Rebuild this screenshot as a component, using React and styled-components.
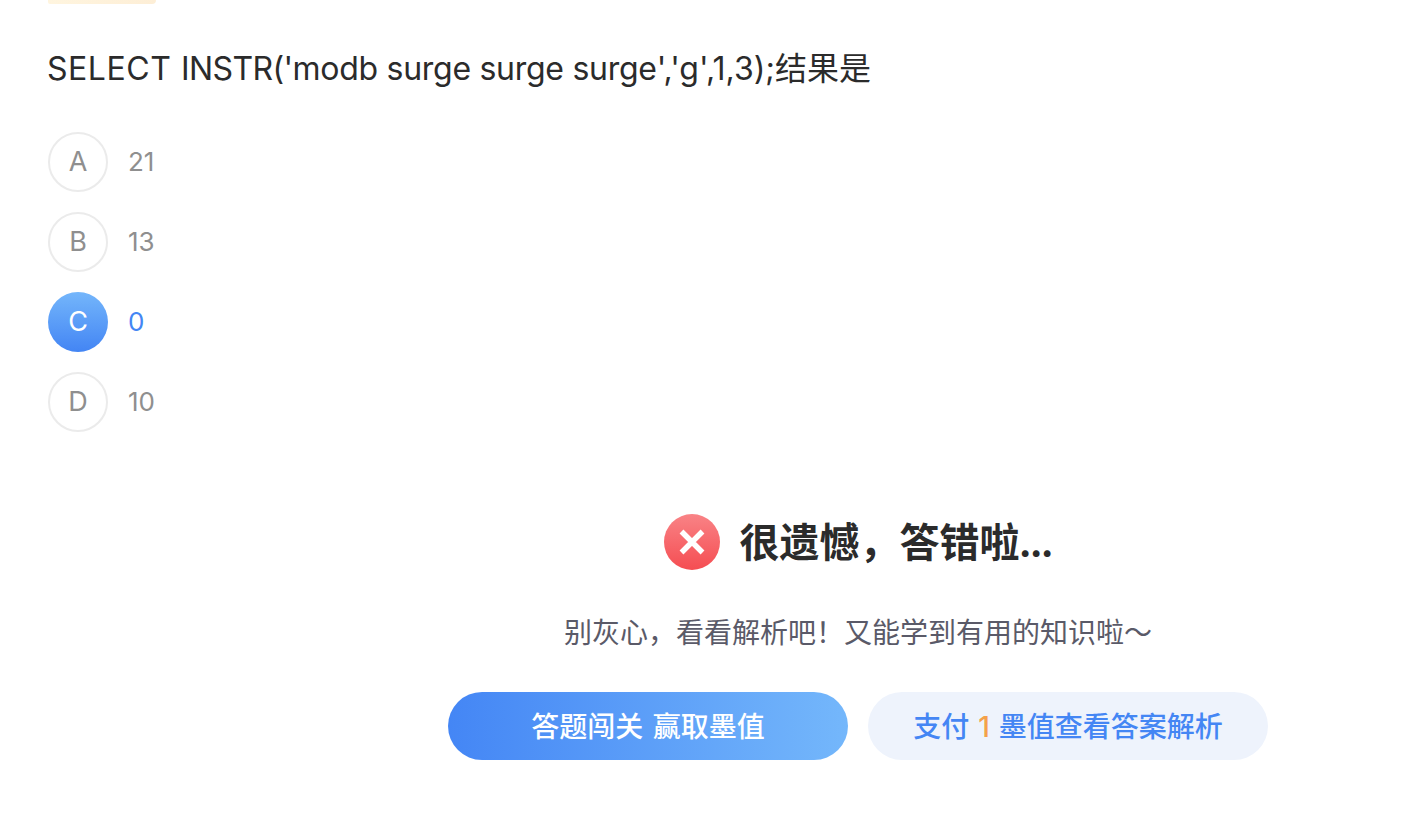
import styled, { createGlobalStyle } from 'styled-components';

const options = [
  { letter: 'A', text: '21' },
  { letter: 'B', text: '13' },
  { letter: 'C', text: '0' },
  { letter: 'D', text: '10' },
];

export default function App() {
  const selected = 'C';

  return (
    <StyledPage>
      <GlobalStyle />
      <StyledTag />
      <StyledQuestion>
        <StyledCode $spacing="0.55px">SELECT </StyledCode>
        <StyledCode $spacing="-0.6px">INSTR('</StyledCode>
        <StyledCode $spacing="-0.28px">modb surge surge surge</StyledCode>
        <StyledCode $spacing="0.02px">','g',1,3);</StyledCode>
        结果是
      </StyledQuestion>
      <StyledOptionList>
        {options.map(({ letter, text }) => (
          <StyledOption key={letter} $active={letter === selected}>
            <StyledLetter $active={letter === selected}>{letter}</StyledLetter>
            <StyledOptionText>{text}</StyledOptionText>
          </StyledOption>
        ))}
      </StyledOptionList>
      <StyledResult>
        <StyledResultTitle>
          <WrongIcon />
          <h2>很遗憾，答错啦<StyledDots>...</StyledDots></h2>
        </StyledResultTitle>
        <StyledHint>别灰心，看看解析吧！又能学到有用的知识啦～</StyledHint>
        <StyledButtons>
          <StyledButton $primary>答题闯关 赢取墨值</StyledButton>
          <StyledButton>支付 <em>1</em> 墨值查看答案解析</StyledButton>
        </StyledButtons>
      </StyledResult>
    </StyledPage>
  );
}

function WrongIcon() {
  return (
    <svg width="56" height="56" viewBox="0 0 56 56">
      <defs>
        <linearGradient id="wrong" x1="0" y1="0" x2="0" y2="1">
          <stop offset="0" stopColor="#f98386" />
          <stop offset="1" stopColor="#f54d52" />
        </linearGradient>
      </defs>
      <circle cx="28" cy="28" r="28" fill="url(#wrong)" />
      <path d="M17.5 17.5L38.5 38.5M38.5 17.5L17.5 38.5" stroke="#fff" strokeWidth="5.4" />
    </svg>
  );
}

const GlobalStyle = createGlobalStyle`
  * {
    box-sizing: border-box;
  }
  body {
    margin: 0;
    background: #ffffff;
    font-family: Inter, "Noto Sans CJK SC", sans-serif;
  }
`;
const StyledPage = styled.div`
  width: 1410px;
  height: 816px;
  padding: 0 48px;
  overflow: hidden;
`;
const StyledTag = styled.div`
  width: 108px;
  height: 4px;
  border-radius: 0 0 8px 4px;
  background: linear-gradient(90deg, #fff5df, #fdeed6);
`;
const StyledQuestion = styled.div`
  display: flex;
  height: 48px;
  margin: 40px 0 0 -1px;
  padding-top: 1px;
  line-height: 48px;
  font-size: 32px;
  color: #2b2b2b;
  white-space: pre;
`;
const StyledCode = styled.span`
  letter-spacing: ${({ $spacing }) => $spacing};
`;
const StyledOptionList = styled.div`
  display: flex;
  flex-direction: column;
  gap: 20px;
  margin-top: 40px;
`;
const StyledOption = styled.div`
  display: flex;
  align-items: center;
  gap: 20px;
  color: ${({ $active }) => ($active ? '#4486f4' : '#8f8f8f')};
`;
const StyledLetter = styled.div`
  display: flex;
  justify-content: center;
  align-items: center;
  width: 60px;
  height: 60px;
  padding-bottom: 1px;
  border-radius: 50%;
  border: ${({ $active }) => ($active ? 'none' : '2px solid #ebebeb')};
  background: ${({ $active }) => ($active ? 'linear-gradient(180deg, #74b6fb, #4385f4)' : '#ffffff')};
  color: ${({ $active }) => ($active ? '#ffffff' : '#8f8f8f')};
  font-size: 27px;
`;
const StyledOptionText = styled.span`
  padding-bottom: 2px;
  font-size: 26px;
`;
const StyledResult = styled.div`
  display: flex;
  flex-direction: column;
  align-items: center;
  width: 820px;
  margin: 82px 0 0 400px;
`;
const StyledResultTitle = styled.div`
  display: flex;
  align-items: center;
  gap: 20px;
  height: 56px;
  h2 {
    margin: 0;
    padding-top: 2px;
    font-size: 40px;
    line-height: 56px;
    font-weight: 700;
    color: #2b2b2b;
    white-space: nowrap;
  }
`;
const StyledDots = styled.span`
  margin-left: -1px;
  margin-right: 1px;
  letter-spacing: -2.4px;
`;
const StyledHint = styled.div`
  height: 40px;
  margin-top: 43px;
  line-height: 40px;
  font-size: 28px;
  color: #5a5a68;
  white-space: nowrap;
`;
const StyledButtons = styled.div`
  display: flex;
  gap: 20px;
  margin-top: 39px;
`;
const StyledButton = styled.button`
  width: 400px;
  height: 68px;
  padding: 0 0 2px;
  border: none;
  border-radius: 34px;
  background: ${({ $primary }) => ($primary ? 'linear-gradient(90deg, #4486f5, #74b7fb)' : '#eef3fc')};
  color: ${({ $primary }) => ($primary ? '#ffffff' : '#4486f4')};
  font-family: inherit;
  font-size: 28px;
  font-weight: 500;
  word-spacing: ${({ $primary }) => ($primary ? '2px' : '1.5px')};
  white-space: nowrap;
  cursor: pointer;
  em {
    font-style: normal;
    color: #f4a14a;
  }
`;
